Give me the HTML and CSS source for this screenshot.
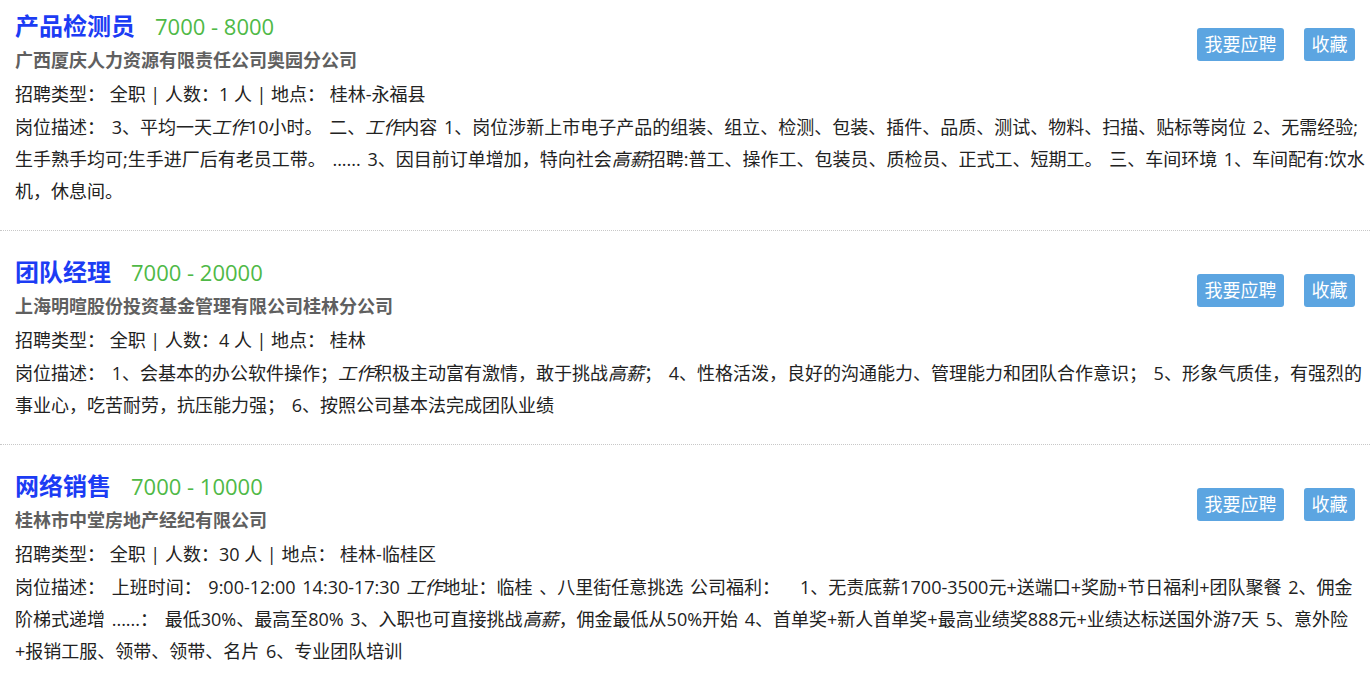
FILE: index.html
```html
<!DOCTYPE html>
<html lang="zh-CN">
<head>
<meta charset="utf-8">
<title>招聘列表</title>
<link rel="stylesheet" href="styles.css">
</head>
<body>
<div class="job-list">
  <div class="job">
    <div class="job-top">
      <div class="job-info">
        <div class="job-title"><span class="name">产品检测员</span><span class="salary">7000 - 8000</span></div>
        <div class="company">广西厦庆人力资源有限责任公司奥园分公司</div>
        <div class="meta">招聘类型： 全职 | 人数：1 人 | 地点： 桂林-永福县</div>
      </div>
      <div class="actions"><span class="btn">我要应聘</span><span class="btn">收藏</span></div>
    </div>
    <div class="desc">岗位描述： 3、平均一天<em>工作</em>10小时。 二、<em>工作</em>内容 1、岗位涉新上市电子产品的组装、组立、检测、包装、插件、品质、测试、物料、扫描、贴标等岗位 2、无需经验;生手熟手均可;生手进厂后有老员工带。 ...... 3、因目前订单增加，特向社会<em>高薪</em>招聘:普工、操作工、包装员、质检员、正式工、短期工。 三、车间环境 1、车间配有:饮水机，休息间。</div>
  </div>
  <div class="job">
    <div class="job-top">
      <div class="job-info">
        <div class="job-title"><span class="name">团队经理</span><span class="salary">7000 - 20000</span></div>
        <div class="company">上海明暄股份投资基金管理有限公司桂林分公司</div>
        <div class="meta">招聘类型： 全职 | 人数：4 人 | 地点： 桂林</div>
      </div>
      <div class="actions"><span class="btn">我要应聘</span><span class="btn">收藏</span></div>
    </div>
    <div class="desc">岗位描述： 1、会基本的办公软件操作；<em>工作</em>积极主动富有激情，敢于挑战<em>高薪</em>； 4、性格活泼，良好的沟通能力、管理能力和团队合作意识； 5、形象气质佳，有强烈的事业心，吃苦耐劳，抗压能力强； 6、按照公司基本法完成团队业绩</div>
  </div>
  <div class="job">
    <div class="job-top">
      <div class="job-info">
        <div class="job-title"><span class="name">网络销售</span><span class="salary">7000 - 10000</span></div>
        <div class="company">桂林市中堂房地产经纪有限公司</div>
        <div class="meta">招聘类型： 全职 | 人数：30 人 | 地点： 桂林-临桂区</div>
      </div>
      <div class="actions"><span class="btn">我要应聘</span><span class="btn">收藏</span></div>
    </div>
    <div class="desc">岗位描述： 上班时间： 9:00-12:00 14:30-17:30 <em>工作</em>地址：临桂 、八里街任意挑选 公司福利：&nbsp;&nbsp; 1、无责底薪1700-3500元+送端口+奖励+节日福利+团队聚餐 2、佣金阶梯式递增 ......： 最低30%、最高至80% 3、入职也可直接挑战<em>高薪</em>，佣金最低从50%开始 4、首单奖+新人首单奖+最高业绩奖888元+业绩达标送国外游7天 5、意外险+报销工服、领带、领带、名片 6、专业团队培训</div>
  </div>
</div>
</body>
</html>
```
FILE: styles.css
```css
html, body {
  margin: 0;
  padding: 0;
  background: #fff;
}
body {
  font-family: "Open Sans", "Noto Sans CJK SC", sans-serif;
  font-size: 18px;
  color: #222;
}
.job {
  padding: 23px 5px 23px 15px;
  border-bottom: 1px dotted #c8c8c8;
}
.job:first-child {
  padding-top: 8px;
}
.job-top {
  display: flex;
  justify-content: space-between;
  align-items: flex-start;
}
.job-title {
  display: flex;
  align-items: baseline;
  height: 35px;
  line-height: 35px;
}
.name {
  font-size: 24px;
  font-weight: bold;
  color: #1c3cf4;
}
.salary {
  font-size: 22px;
  color: #4fb947;
  margin-left: 20px;
}
.company {
  line-height: 34px;
  font-weight: bold;
  color: #606060;
}
.meta {
  line-height: 34px;
}
.actions {
  display: flex;
  gap: 20px;
  padding-top: 20px;
  margin-right: 10px;
}
.btn {
  display: block;
  background: #5ca5e1;
  color: #fff;
  line-height: 33px;
  height: 33px;
  padding: 0 7.5px;
  border-radius: 3px;
}
.desc {
  line-height: 32px;
  word-spacing: 2px;
}
.desc em {
  font-style: italic;
}
```
